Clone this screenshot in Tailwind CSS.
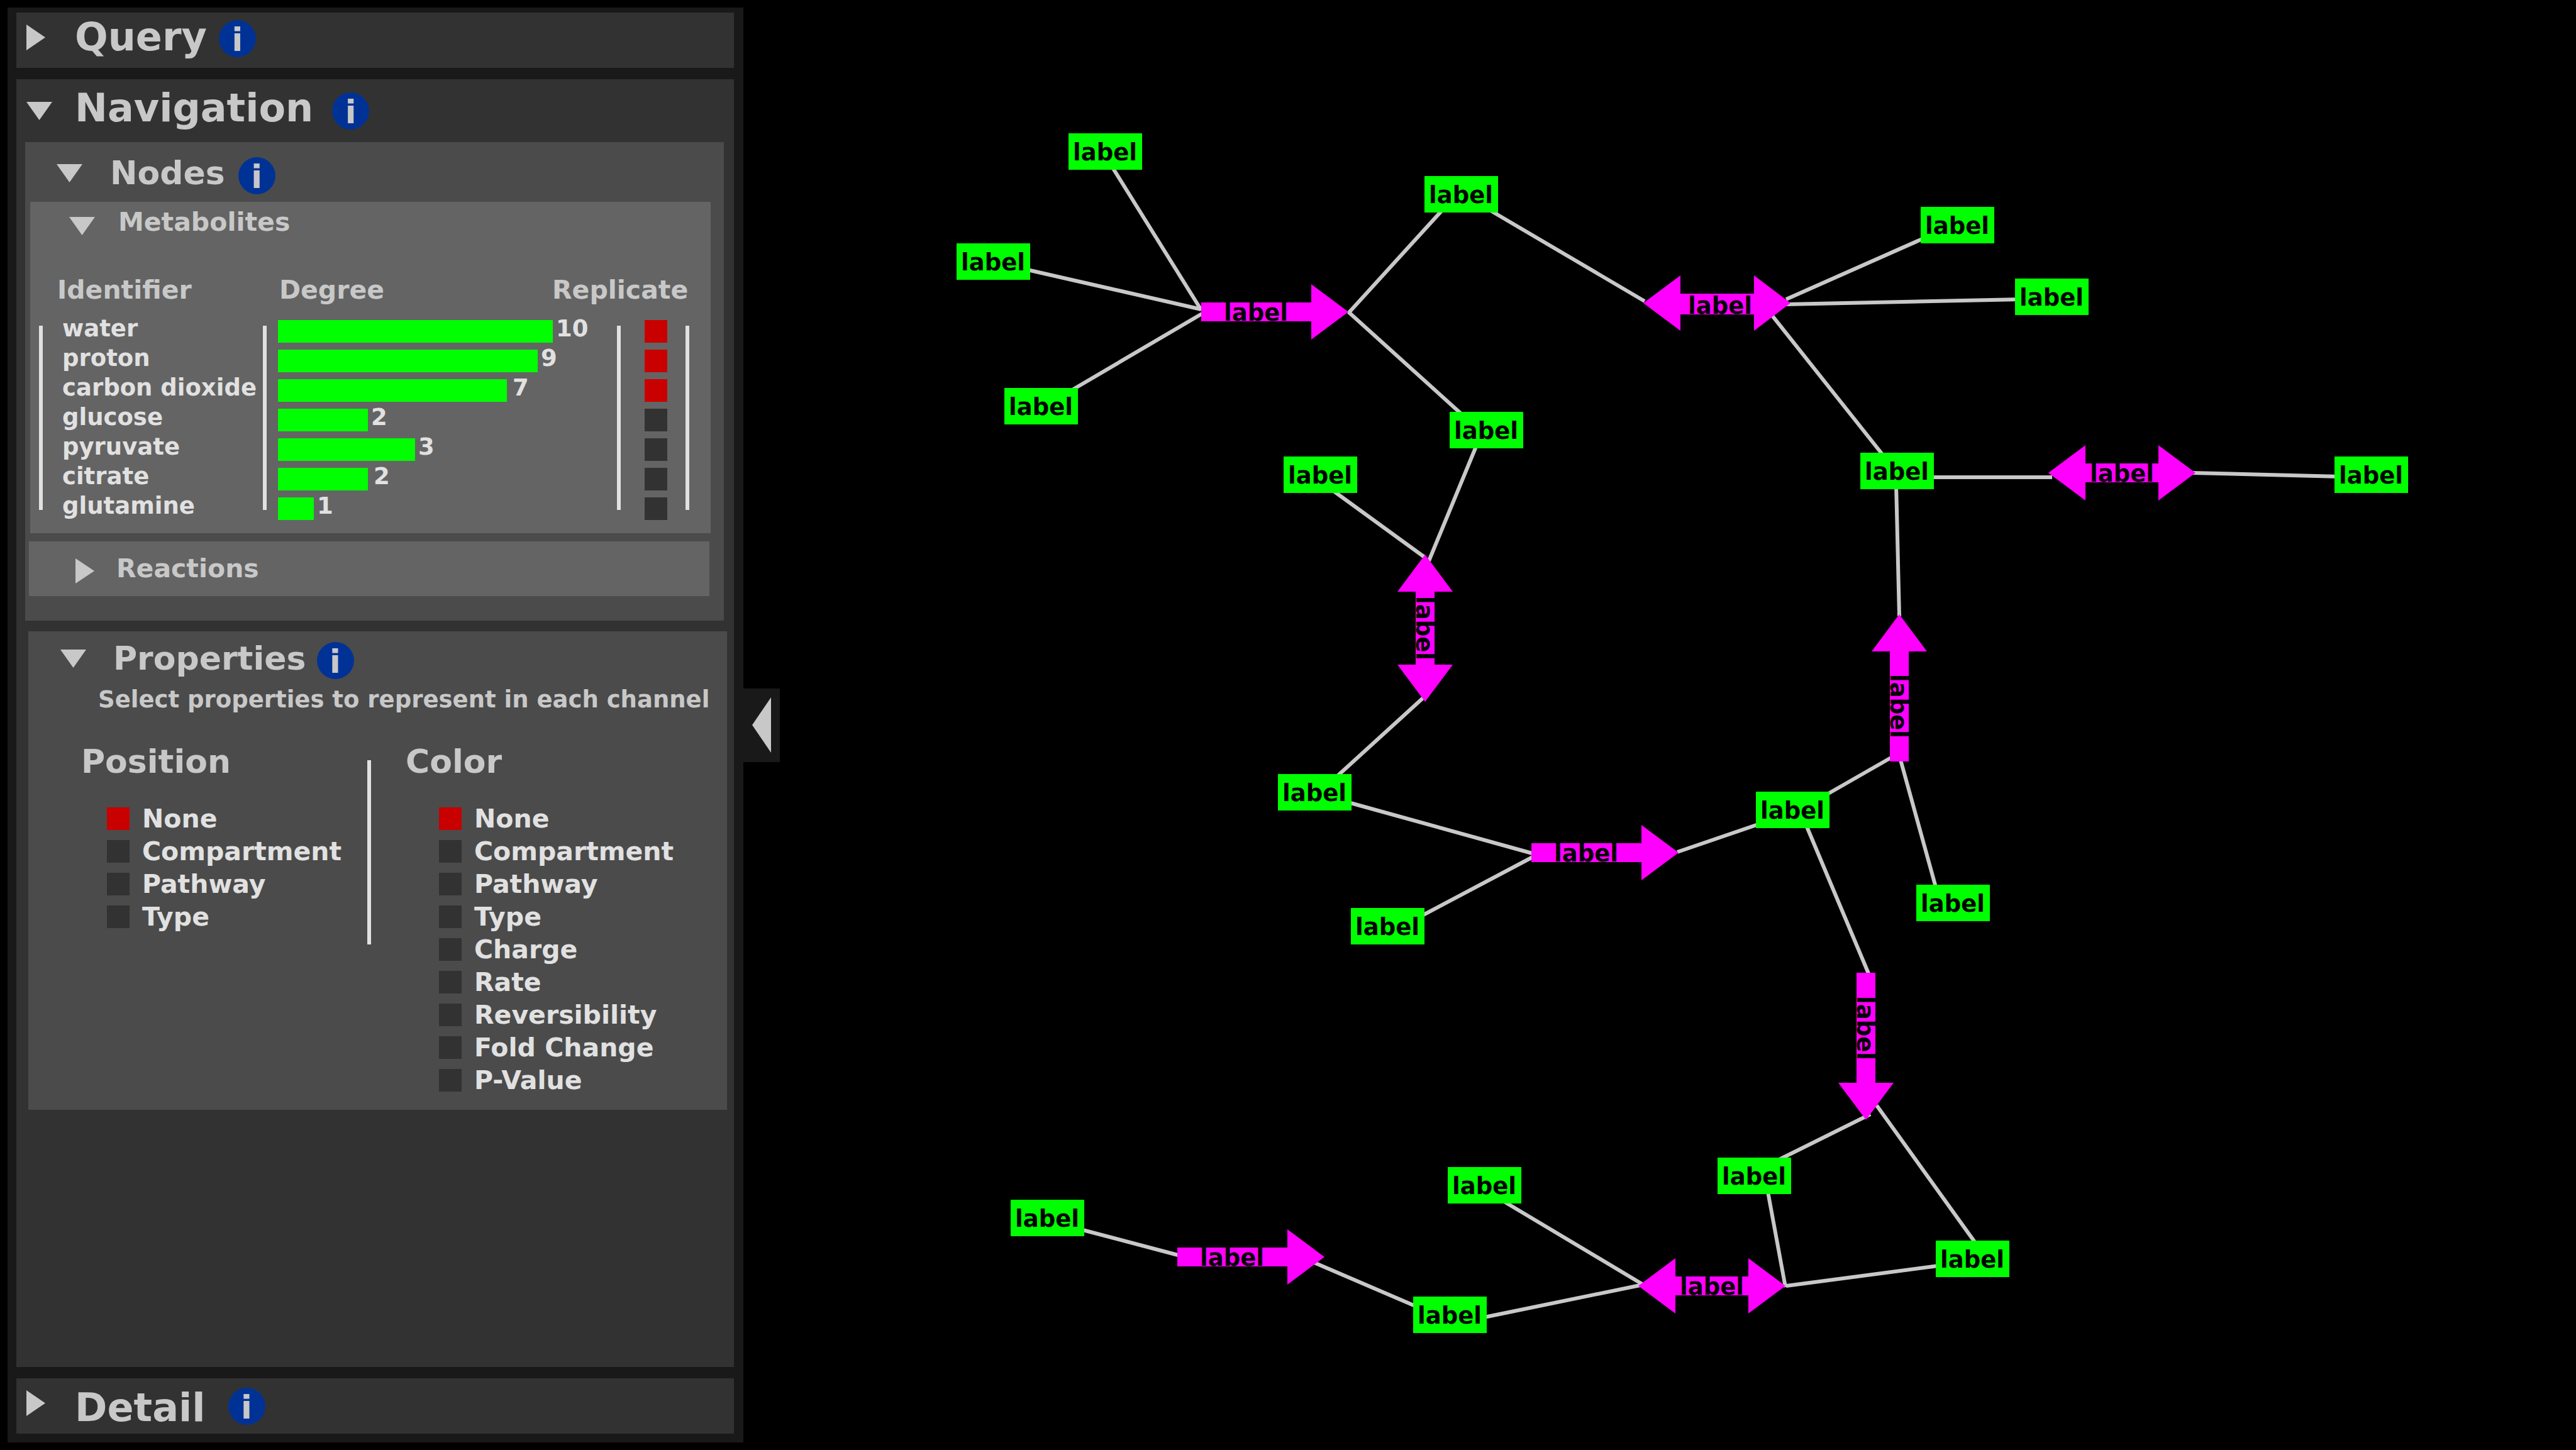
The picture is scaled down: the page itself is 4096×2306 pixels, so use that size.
<!DOCTYPE html>
<html lang="en">
<head>
<meta charset="utf-8">
<title>Metabolic network</title>
<script src="https://cdn.jsdelivr.net/npm/@tailwindcss/browser@4"></script>
</head>
<body class="flex h-screen overflow-hidden bg-black font-['DejaVu_Sans',Verdana,sans-serif] font-bold leading-none text-[#c8c8c8]">

<aside class="my-3 ml-3 flex w-[1170px] shrink-0 flex-col gap-[18px] bg-[#191919] pt-2 pr-[15px] pb-[14px] pl-[14px]">

  <!-- Query -->
  <section class="flex h-[88px] shrink-0 items-center gap-[19px] bg-[#323232] pb-[10px] pl-4">
    <h2 class="text-[62px]"><button type="button" aria-expanded="false" class="flex items-center gap-[47px]">
      <svg class="h-[41px] w-[30px]" viewBox="0 0 30 41" fill="#c8c8c8" aria-hidden="true"><path d="M0 0L30 20.500L0 41Z"/></svg>Query</button></h2>
    <button type="button" aria-label="About Query" class="mt-1 flex size-[59px] items-center justify-center rounded-full bg-[#003296] pt-[3px] text-[52px]">i</button>
  </section>

  <!-- Navigation -->
  <section class="min-h-0 flex-1 bg-[#323232]">
    <div class="flex h-[100px] items-center gap-[30px] pl-4">
      <h2 class="text-[62px]"><button type="button" aria-expanded="true" class="flex items-center gap-9">
        <svg class="h-[29px] w-[41px]" viewBox="0 0 41 29" fill="#c8c8c8" aria-hidden="true"><path d="M0 0H41L20.500 29Z"/></svg><span class="pb-2">Navigation</span></button></h2>
      <button type="button" aria-label="About Navigation" class="flex size-[59px] items-center justify-center rounded-full bg-[#003296] pt-[3px] text-[52px]">i</button>
    </div>

    <div class="mr-4 ml-[14px] bg-[#4b4b4b] pb-[39px]">
      <div class="flex h-[95px] items-center gap-[21px] pt-[3px] pl-[50px]">
        <h3 class="text-[52px]"><button type="button" aria-expanded="true" class="flex items-center gap-11">
          <svg class="h-[29px] w-[41px]" viewBox="0 0 41 29" fill="#c8c8c8" aria-hidden="true"><path d="M0 0H41L20.500 29Z"/></svg>Nodes</button></h3>
        <button type="button" aria-label="About Nodes" class="mt-2 flex size-[59px] items-center justify-center rounded-full bg-[#003296] pt-[3px] text-[52px]">i</button>
      </div>

      <div class="mr-[21px] ml-2 bg-[#646464] pb-4">
        <h4 class="mb-[35px] flex h-16 items-center pl-[62px] text-[41px]"><button type="button" aria-expanded="true" class="flex items-center gap-[37px]">
          <svg class="mt-3 h-[29px] w-[41px]" viewBox="0 0 41 29" fill="#c8c8c8" aria-hidden="true"><path d="M0 0H41L20.500 29Z"/></svg>Metabolites</button></h4>

        <div class="grid pl-[14px]">
          <table class="w-[1034px] table-fixed border-collapse text-left text-[37px] text-[#e1e1e1] [grid-area:1/1]">
            <colgroup><col class="w-[380px]"><col class="w-[436px]"><col class="w-[218px]"></colgroup>
            <thead>
              <tr class="h-[83px] text-[41px] text-[#c8c8c8]">
                <th scope="col" class="p-0 pl-[29px]">Identifier</th>
                <th scope="col" class="p-0 pl-0.5">Degree</th>
                <th scope="col" class="p-0">Replicate</th>
              </tr>
            </thead>
            <tbody>
              <tr class="h-[47px]">
                <td class="p-0 pb-2 pl-[37px] whitespace-nowrap">water</td>
                <td class="p-0"><div class="flex h-[47px] items-center gap-[5px]"><span class="h-9 shrink-0 bg-[#00ff00]" style="width:437px"></span><span class="pb-2">10</span></div></td>
                <td class="p-0"><div class="flex h-[47px] items-center pl-[147px]"><input type="checkbox" checked aria-label="Replicate water" class="size-9 appearance-none bg-[#323232] checked:bg-[#c80000]"></div></td>
              </tr>
              <tr class="h-[47px]">
                <td class="p-0 pb-2 pl-[37px] whitespace-nowrap">proton</td>
                <td class="p-0"><div class="flex h-[47px] items-center gap-[5px]"><span class="h-9 shrink-0 bg-[#00ff00]" style="width:413px"></span><span class="pb-2">9</span></div></td>
                <td class="p-0"><div class="flex h-[47px] items-center pl-[147px]"><input type="checkbox" checked aria-label="Replicate proton" class="size-9 appearance-none bg-[#323232] checked:bg-[#c80000]"></div></td>
              </tr>
              <tr class="h-[47px]">
                <td class="p-0 pb-2 pl-[37px] whitespace-nowrap">carbon dioxide</td>
                <td class="p-0"><div class="flex h-[47px] items-center gap-[9px]"><span class="h-9 shrink-0 bg-[#00ff00]" style="width:364px"></span><span class="pb-2">7</span></div></td>
                <td class="p-0"><div class="flex h-[47px] items-center pl-[147px]"><input type="checkbox" checked aria-label="Replicate carbon dioxide" class="size-9 appearance-none bg-[#323232] checked:bg-[#c80000]"></div></td>
              </tr>
              <tr class="h-[47px]">
                <td class="p-0 pb-2 pl-[37px] whitespace-nowrap">glucose</td>
                <td class="p-0"><div class="flex h-[47px] items-center gap-[5px]"><span class="h-9 shrink-0 bg-[#00ff00]" style="width:143px"></span><span class="pb-2">2</span></div></td>
                <td class="p-0"><div class="flex h-[47px] items-center pl-[147px]"><input type="checkbox" aria-label="Replicate glucose" class="size-9 appearance-none bg-[#323232] checked:bg-[#c80000]"></div></td>
              </tr>
              <tr class="h-[47px]">
                <td class="p-0 pb-2 pl-[37px] whitespace-nowrap">pyruvate</td>
                <td class="p-0"><div class="flex h-[47px] items-center gap-[5px]"><span class="h-9 shrink-0 bg-[#00ff00]" style="width:218px"></span><span class="pb-2">3</span></div></td>
                <td class="p-0"><div class="flex h-[47px] items-center pl-[147px]"><input type="checkbox" aria-label="Replicate pyruvate" class="size-9 appearance-none bg-[#323232] checked:bg-[#c80000]"></div></td>
              </tr>
              <tr class="h-[47px]">
                <td class="p-0 pb-2 pl-[37px] whitespace-nowrap">citrate</td>
                <td class="p-0"><div class="flex h-[47px] items-center gap-[9px]"><span class="h-9 shrink-0 bg-[#00ff00]" style="width:143px"></span><span class="pb-2">2</span></div></td>
                <td class="p-0"><div class="flex h-[47px] items-center pl-[147px]"><input type="checkbox" aria-label="Replicate citrate" class="size-9 appearance-none bg-[#323232] checked:bg-[#c80000]"></div></td>
              </tr>
              <tr class="h-[47px]">
                <td class="p-0 pb-2 pl-[37px] whitespace-nowrap">glutamine</td>
                <td class="p-0"><div class="flex h-[47px] items-center gap-[5px]"><span class="h-9 shrink-0 bg-[#00ff00]" style="width:57px"></span><span class="pb-2">1</span></div></td>
                <td class="p-0"><div class="flex h-[47px] items-center pl-[147px]"><input type="checkbox" aria-label="Replicate glutamine" class="size-9 appearance-none bg-[#323232] checked:bg-[#c80000]"></div></td>
              </tr>
            </tbody>
          </table>
          <!-- column rules -->
          <div class="pointer-events-none flex pt-[98px] [grid-area:1/1]" aria-hidden="true">
            <span class="h-[293px] w-1.5 bg-[#e1e1e1]"></span>
            <span class="ml-[350px] h-[293px] w-1.5 bg-[#e1e1e1]"></span>
            <span class="ml-[557px] h-[293px] w-1.5 bg-[#e1e1e1]"></span>
            <span class="ml-[103px] h-[293px] w-1.5 bg-[#e1e1e1]"></span>
          </div>
        </div>
      </div>

      <h4 class="mt-[13px] mr-[23px] ml-[6px] flex h-[87px] items-center bg-[#646464] pl-[74px] text-[41px]"><button type="button" aria-expanded="false" class="flex items-center gap-[35px]">
        <svg class="mt-1.5 h-10 w-[30px]" viewBox="0 0 30 40" fill="#c8c8c8" aria-hidden="true"><path d="M0 0L30 20L0 40Z"/></svg>Reactions</button></h4>
    </div>

    <div class="mt-[17px] mr-[11px] ml-[19px] bg-[#4b4b4b] pb-[21px]">
      <div class="flex h-[86px] items-center gap-[17px] pl-[51px]">
        <h3 class="text-[52px]"><button type="button" aria-expanded="true" class="flex items-center gap-[43px]">
          <svg class="h-[29px] w-[41px]" viewBox="0 0 41 29" fill="#c8c8c8" aria-hidden="true"><path d="M0 0H41L20.500 29Z"/></svg>Properties</button></h3>
        <button type="button" aria-label="About Properties" class="mt-1.5 flex size-[59px] items-center justify-center rounded-full bg-[#003296] pt-[3px] text-[52px]">i</button>
      </div>
      <p class="pl-[111px] text-[37px] leading-[46px] whitespace-nowrap">Select properties to represent in each channel</p>

      <div class="mt-[45px] flex items-start">
        <div class="w-[539px]" role="radiogroup" aria-labelledby="position">
          <h4 id="position" class="mb-[35px] pl-[84px] text-[52px] leading-[60px]">Position</h4>
          <div class="flex flex-col pl-[125px] text-[41px] text-[#e1e1e1]">
            <label class="flex h-[52px] items-center gap-5"><input type="radio" name="position" checked class="size-9 appearance-none bg-[#323232] checked:bg-[#c80000]">None</label>
            <label class="flex h-[52px] items-center gap-5"><input type="radio" name="position" class="size-9 appearance-none bg-[#323232] checked:bg-[#c80000]">Compartment</label>
            <label class="flex h-[52px] items-center gap-5"><input type="radio" name="position" class="size-9 appearance-none bg-[#323232] checked:bg-[#c80000]">Pathway</label>
            <label class="flex h-[52px] items-center gap-5"><input type="radio" name="position" class="size-9 appearance-none bg-[#323232] checked:bg-[#c80000]">Type</label>
          </div>
        </div>
        <div class="mt-7 h-[293px] w-1.5 bg-[#e1e1e1]"></div>
        <div class="flex-1" role="radiogroup" aria-labelledby="color">
          <h4 id="color" class="mb-[35px] pl-[55px] text-[52px] leading-[60px]">Color</h4>
          <div class="flex flex-col pl-[108px] text-[41px] text-[#e1e1e1]">
            <label class="flex h-[52px] items-center gap-5"><input type="radio" name="color" checked class="size-9 appearance-none bg-[#323232] checked:bg-[#c80000]">None</label>
            <label class="flex h-[52px] items-center gap-5"><input type="radio" name="color" class="size-9 appearance-none bg-[#323232] checked:bg-[#c80000]">Compartment</label>
            <label class="flex h-[52px] items-center gap-5"><input type="radio" name="color" class="size-9 appearance-none bg-[#323232] checked:bg-[#c80000]">Pathway</label>
            <label class="flex h-[52px] items-center gap-5"><input type="radio" name="color" class="size-9 appearance-none bg-[#323232] checked:bg-[#c80000]">Type</label>
            <label class="flex h-[52px] items-center gap-5"><input type="radio" name="color" class="size-9 appearance-none bg-[#323232] checked:bg-[#c80000]">Charge</label>
            <label class="flex h-[52px] items-center gap-5"><input type="radio" name="color" class="size-9 appearance-none bg-[#323232] checked:bg-[#c80000]">Rate</label>
            <label class="flex h-[52px] items-center gap-5"><input type="radio" name="color" class="size-9 appearance-none bg-[#323232] checked:bg-[#c80000]">Reversibility</label>
            <label class="flex h-[52px] items-center gap-5"><input type="radio" name="color" class="size-9 appearance-none bg-[#323232] checked:bg-[#c80000]">Fold Change</label>
            <label class="flex h-[52px] items-center gap-5"><input type="radio" name="color" class="size-9 appearance-none bg-[#323232] checked:bg-[#c80000]">P-Value</label>
          </div>
        </div>
      </div>
    </div>
  </section>

  <!-- Detail -->
  <section class="flex h-[88px] shrink-0 items-center gap-9 bg-[#323232] pl-4">
    <h2 class="text-[62px]"><button type="button" aria-expanded="false" class="flex items-center gap-[47px]">
      <svg class="mb-[10px] h-[41px] w-[30px]" viewBox="0 0 30 41" fill="#c8c8c8" aria-hidden="true"><path d="M0 0L30 20.500L0 41Z"/></svg><span class="pt-1.5">Detail</span></button></h2>
    <button type="button" aria-label="About Detail" class="flex size-[59px] items-center justify-center rounded-full bg-[#003296] pt-[3px] text-[52px]">i</button>
  </section>
</aside>

<button type="button" aria-label="Collapse panel" class="flex h-[117px] w-[58px] shrink-0 items-center justify-center self-center bg-[#191919]">
  <svg class="h-[88px] w-[30px]" viewBox="0 0 30 88" fill="#c8c8c8" aria-hidden="true"><path d="M30 0V88L0 44Z"/></svg>
</button>

<main class="min-w-0 flex-1">
  <svg class="block h-full w-full" viewBox="1240 0 2856 2306" font-size="37" text-anchor="middle">
    <defs>
      <path id="one-way" fill="#ff00ff" d="M0 -15H175V-44L234 0L175 44V15H0Z"/>
      <path id="two-way" fill="#ff00ff" d="M-117 0L-58 -44V-15H58V-44L117 0L58 44V15H-58V44Z"/>
      <rect id="node" width="117" height="58" fill="#00ff00"/>
    </defs>

    <!-- links -->
    <g stroke="#c8c8c8" stroke-width="6">
      <path d="M1765 260L1910 493"/>
      <path d="M1625 427L1910 492"/>
      <path d="M1693 627L1911 499"/>
      <path d="M2144 498L2299 328"/>
      <path d="M2144 496L2330 664"/>
      <path d="M2360 329L2615 479"/>
      <path d="M2350 703L2272 892"/>
      <path d="M2111 774L2265 886"/>
      <path d="M2266 1107L2120 1240"/>
      <path d="M2133 1273L2436 1357"/>
      <path d="M2250 1462L2437 1363"/>
      <path d="M2667 1355L2810 1306"/>
      <path d="M2895 1269L3012 1202"/>
      <path d="M3021 1205L3080 1418"/>
      <path d="M2868 1303L2971 1548"/>
      <path d="M3015 770L3020 980"/>
      <path d="M2840 476L3070 374"/>
      <path d="M2840 484L3215 476"/>
      <path d="M2810 492L2999 730"/>
      <path d="M3065 759L3263 759"/>
      <path d="M3485 752L3722 758"/>
      <path d="M1710 1953L1873 1996"/>
      <path d="M2085 2006L2255 2079"/>
      <path d="M2350 2097L2608 2044"/>
      <path d="M2385 1907L2611 2042"/>
      <path d="M2810 1890L2839 2047"/>
      <path d="M3090 2012L2840 2045"/>
      <path d="M2984 1758L3147 1985"/>
      <path d="M2974 1772L2825 1846"/>
    </g>

    <!-- reactions -->
    <use href="#one-way" x="1910" y="496"/><text x="1997" y="510">label</text>
    <use href="#one-way" x="2435" y="1356"/><text x="2522" y="1370">label</text>
    <use href="#one-way" x="1872" y="1999"/><text x="1959" y="2013">label</text>
    <use href="#one-way" transform="translate(3020 1211) rotate(-90)"/><text transform="translate(3006 1123) rotate(90)">label</text>
    <use href="#one-way" transform="translate(2967 1547) rotate(90)"/><text transform="translate(2953 1635) rotate(90)">label</text>
    <path fill="#ff00ff" d="M2613 482L2672 438V467H2789V438L2847 482L2789 526V500H2672V526Z"/><text x="2735" y="499">label</text>
    <use href="#two-way" x="3374" y="752"/><text x="3374" y="766">label</text>
    <use href="#two-way" x="2722" y="2045"/><text x="2722" y="2059">label</text>
    <use href="#two-way" transform="translate(2266 999) rotate(90)"/><text transform="translate(2252 999) rotate(90)">label</text>

    <!-- metabolites -->
    <use href="#node" x="1699" y="212"/><text x="1757" y="255">label</text>
    <use href="#node" x="1521" y="387"/><text x="1579" y="430">label</text>
    <use href="#node" x="1597" y="617"/><text x="1655" y="660">label</text>
    <use href="#node" x="2265" y="280"/><text x="2323" y="323">label</text>
    <use href="#node" x="2305" y="655"/><text x="2363" y="698">label</text>
    <use href="#node" x="2041" y="726"/><text x="2099" y="769">label</text>
    <use href="#node" x="3054" y="329"/><text x="3112" y="372">label</text>
    <use href="#node" x="3204" y="443"/><text x="3262" y="486">label</text>
    <use href="#node" x="2958" y="720"/><text x="3016" y="763">label</text>
    <use href="#node" x="3712" y="726"/><text x="3770" y="769">label</text>
    <use href="#node" x="2032" y="1231"/><text x="2090" y="1274">label</text>
    <use href="#node" x="2148" y="1444"/><text x="2206" y="1487">label</text>
    <use href="#node" x="2792" y="1259"/><text x="2850" y="1302">label</text>
    <use href="#node" x="3047" y="1407"/><text x="3105" y="1450">label</text>
    <use href="#node" x="1607" y="1908"/><text x="1665" y="1951">label</text>
    <use href="#node" x="2302" y="1856"/><text x="2360" y="1899">label</text>
    <use href="#node" x="2731" y="1841"/><text x="2789" y="1884">label</text>
    <use href="#node" x="3078" y="1973"/><text x="3136" y="2016">label</text>
    <use href="#node" x="2247" y="2062"/><text x="2305" y="2105">label</text>
  </svg>
</main>
</body>
</html>
